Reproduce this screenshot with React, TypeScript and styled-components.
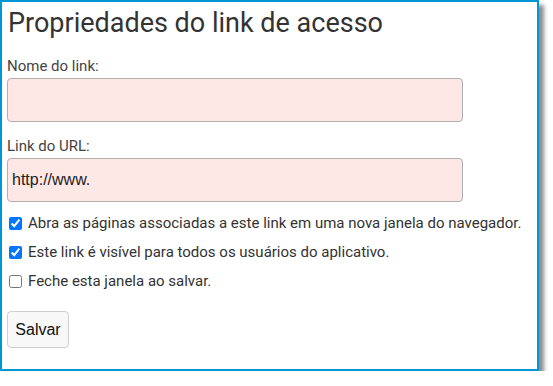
import React from "react";
import styled, { createGlobalStyle } from "styled-components";

const GlobalStyle = createGlobalStyle`
  html, body {
    margin: 0;
    padding: 0;
    background: #ffffff;
  }
  body {
    font-family: Roboto, "Liberation Sans", Arial, sans-serif;
  }
`;

const Frame = styled.div`
  box-sizing: border-box;
  width: 539px;
  height: 371px;
  border: 2px solid #0096d6;
  background: #ffffff;
  box-shadow: 5px 5px 4px rgba(0, 0, 0, 0.45);
  padding: 5px 5px 0 5px;
`;

const Title = styled.h1`
  margin: 0 0 18px 1px;
  font-family: Roboto, sans-serif;
  font-size: 27px;
  font-weight: 400;
  color: #333333;
  line-height: 32px;
`;

const Field = styled.div<{ $after: number }>`
  display: flex;
  flex-direction: column;
  gap: 3px;
  margin-bottom: ${(p) => p.$after}px;
`;

const Label = styled.label`
  font-family: Roboto, sans-serif;
  font-size: 15px;
  line-height: 18px;
  color: #444444;
`;

const TextInput = styled.input`
  box-sizing: border-box;
  width: 456px;
  height: 44px;
  margin: 0;
  padding: 0 4px;
  border: 1px solid #b0b0b0;
  border-radius: 4px;
  background: #fde8e6;
  font-family: "Liberation Sans", Arial, sans-serif;
  font-size: 16px;
  color: #222222;
  outline: none;
`;

const Options = styled.div`
  display: flex;
  flex-direction: column;
  gap: 11px;
`;

const Option = styled.label`
  display: flex;
  align-items: center;
  gap: 6px;
  height: 18px;
  font-family: Roboto, sans-serif;
  font-size: 15px;
  color: #333333;
`;

const Check = styled.input.attrs({ type: "checkbox" })`
  width: 13px;
  height: 13px;
  margin: 0 0 0 2px;
  accent-color: #0075ff;
`;

const SaveButton = styled.button`
  box-sizing: border-box;
  margin-top: 21px;
  width: 62px;
  height: 37px;
  padding: 0;
  border: 1px solid #d0d0d0;
  border-radius: 4px;
  background: #f8f8f8;
  font-family: "Liberation Sans", Arial, sans-serif;
  font-size: 16px;
  color: #111111;
`;

export default function App() {
  return (
    <>
      <GlobalStyle />
      <Frame>
        <Title>Propriedades do link de acesso</Title>
        <Field $after={15}>
          <Label>Nome do link:</Label>
          <TextInput defaultValue="" />
        </Field>
        <Field $after={12}>
          <Label>Link do URL:</Label>
          <TextInput defaultValue="http://www." />
        </Field>
        <Options>
          <Option>
            <Check defaultChecked />
            Abra as páginas associadas a este link em uma nova janela do navegador.
          </Option>
          <Option>
            <Check defaultChecked />
            Este link é visível para todos os usuários do aplicativo.
          </Option>
          <Option>
            <Check />
            Feche esta janela ao salvar.
          </Option>
        </Options>
        <SaveButton>Salvar</SaveButton>
      </Frame>
    </>
  );
}
